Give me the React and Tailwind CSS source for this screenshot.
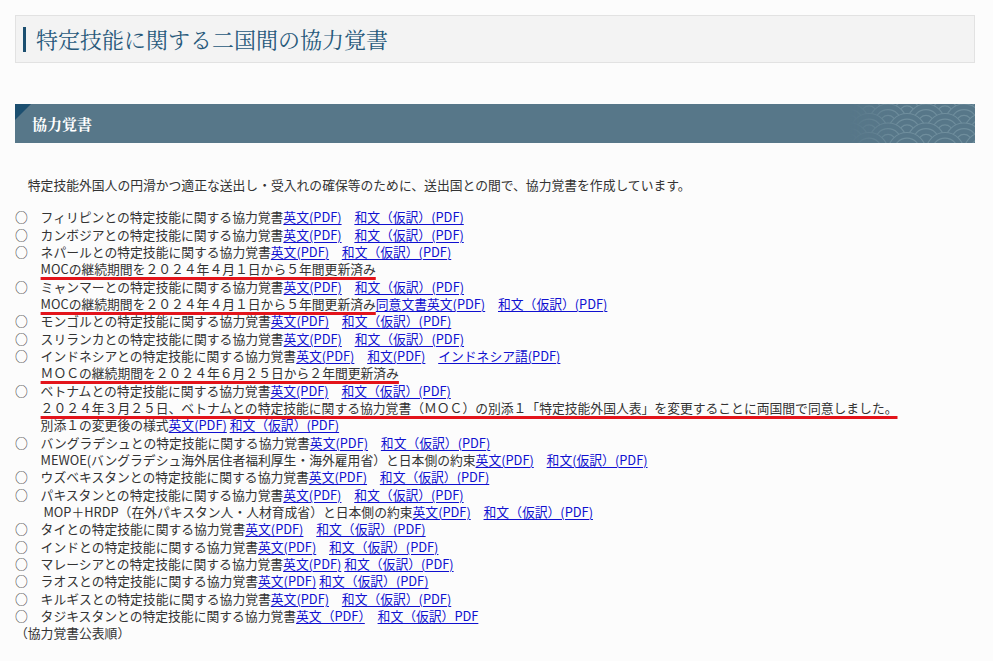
import React from "react";

const S = "\u3000";
const S2 = "\u3000\u3000";

const L = ({ children }) => (
  <a href="#" className="text-[#1010d0] underline decoration-1 underline-offset-[2px]">
    {children}
  </a>
);

const R = ({ children }) => (
  <span className="underline decoration-[3px] decoration-[#e3141b] underline-offset-[3px] [text-decoration-skip-ink:none]">
    {children}
  </span>
);

const Row = ({ children }) => <div className="whitespace-pre h-[17.33px] leading-[17.33px]">{children}</div>;

const Country = ({ name, en = "英文(PDF)", ja = "和文（仮訳）(PDF)", sep = S }) => (
  <Row>
    {"○" + S + name + "との特定技能に関する協力覚書"}
    <L>{en}</L>
    {sep}
    <L>{ja}</L>
  </Row>
);

function Seigaiha() {
  const r = 19;
  const circles = [];
  for (let row = 0; row < 8; row++) {
    const y = -r + row * (r / 2);
    const off = row % 2 ? r : 0;
    for (let col = -1; col < 5; col++) {
      circles.push({ x: col * 2 * r + off, y, k: `${row}-${col}` });
    }
  }
  return (
    <svg width="125" height="39" viewBox="0 0 125 39" className="absolute right-0 top-0">
      <defs>
        <linearGradient id="fade" x1="0" x2="1" y1="0" y2="0">
          <stop offset="0" stopColor="#fff" stopOpacity="0" />
          <stop offset="0.4" stopColor="#fff" stopOpacity="1" />
          <stop offset="1" stopColor="#fff" stopOpacity="1" />
        </linearGradient>
        <mask id="m">
          <rect x="0" y="0" width="125" height="39" fill="url(#fade)" />
        </mask>
      </defs>
      <g mask="url(#m)">
        {circles.map((c) => (
          <g key={c.k}>
            <circle cx={c.x} cy={c.y} r={r} fill="#577789" stroke="#6f8e9d" strokeWidth="1.2" />
            <circle cx={c.x} cy={c.y} r={r * 0.7} fill="none" stroke="#6f8e9d" strokeWidth="1.2" />
            <circle cx={c.x} cy={c.y} r={r * 0.4} fill="none" stroke="#6f8e9d" strokeWidth="1.2" />
          </g>
        ))}
      </g>
    </svg>
  );
}

export default function App() {
  return (
    <div
      className="min-h-[661px] bg-[#fcfcfc] pl-[15px] pr-[18px] pt-[15px] text-[#333] text-[12.8px]"
      style={{ fontFamily: '"Noto Sans CJK JP", "Noto Sans", sans-serif' }}
    >
      <div className="h-[48px] bg-[#f3f3f3] border border-[#e2e2e2] flex items-center pl-[7px]">
        <div className="w-[3px] h-[25px] bg-[#1b4f70]" />
        <h1
          className="ml-[10px] text-[22px] text-[#27597b] leading-none"
          style={{ fontFamily: '"Noto Serif CJK JP", "Noto Sans CJK JP", serif' }}
        >
          特定技能に関する二国間の協力覚書
        </h1>
      </div>

      <div className="mt-[41px] h-[39px] bg-[#577789] relative overflow-hidden flex items-center pl-[17px]">
        <svg width="16" height="16" viewBox="0 0 16 16" className="absolute left-0 top-0">
          <polygon points="0,0 16,0 0,16" fill="#1c4f70" />
        </svg>
        <Seigaiha />
        <h2
          className="relative text-white font-bold text-[15px] leading-none"
          style={{ fontFamily: '"Noto Serif CJK JP", "Noto Sans CJK JP", serif' }}
        >
          協力覚書
        </h2>
      </div>

      <p className="mt-[33px] whitespace-pre leading-[17.33px]">
        {S + "特定技能外国人の円滑かつ適正な送出し・受入れの確保等のために、送出国との間で、協力覚書を作成しています。"}
      </p>

      <div className="mt-[15px]">
        <Country name="フィリピン" />
        <Country name="カンボジア" />
        <Country name="ネパール" />
        <Row>
          {S2}
          <R>MOCの継続期間を２０２４年４月１日から５年間更新済み</R>
        </Row>
        <Country name="ミャンマー" />
        <Row>
          {S2}
          <R>MOCの継続期間を２０２４年４月１日から５年間更新済み</R>
          <L>同意文書英文(PDF)</L>
          {S}
          <L>和文（仮訳）(PDF)</L>
        </Row>
        <Country name="モンゴル" />
        <Country name="スリランカ" />
        <Row>
          {"○" + S + "インドネシアとの特定技能に関する協力覚書"}
          <L>英文(PDF)</L>
          {S}
          <L>和文(PDF)</L>
          {S}
          <L>インドネシア語(PDF)</L>
        </Row>
        <Row>
          {S2}
          <R>ＭＯＣの継続期間を２０２４年６月２５日から２年間更新済み</R>
        </Row>
        <Country name="ベトナム" />
        <Row>
          {S2}
          <R>
            ２０２４年３月２５日、ベトナムとの特定技能に関する協力覚書（ＭＯＣ）の別添１「特定技能外国人表」を変更することに両国間で同意しました。
          </R>
        </Row>
        <Row>
          {S2 + "別添１の変更後の様式"}
          <L>英文(PDF)</L>
          {" "}
          <L>和文（仮訳）(PDF)</L>
        </Row>
        <Country name="バングラデシュ" />
        <Row>
          {S2 + "MEWOE(バングラデシュ海外居住者福利厚生・海外雇用省）と日本側の約束"}
          <L>英文(PDF)</L>
          {S}
          <L>和文(仮訳）(PDF)</L>
        </Row>
        <Country name="ウズベキスタン" />
        <Country name="パキスタン" />
        <Row>
          {S2 + " MOP＋HRDP（在外パキスタン人・人材育成省）と日本側の約束"}
          <L>英文(PDF)</L>
          {S}
          <L>和文（仮訳）(PDF)</L>
        </Row>
        <Country name="タイ" />
        <Country name="インド" />
        <Country name="マレーシア" sep=" " />
        <Country name="ラオス" sep=" " />
        <Country name="キルギス" />
        <Country name="タジキスタン" en="英文（PDF）" ja="和文（仮訳）PDF" />
        <Row>（協力覚書公表順）</Row>
      </div>
    </div>
  );
}
